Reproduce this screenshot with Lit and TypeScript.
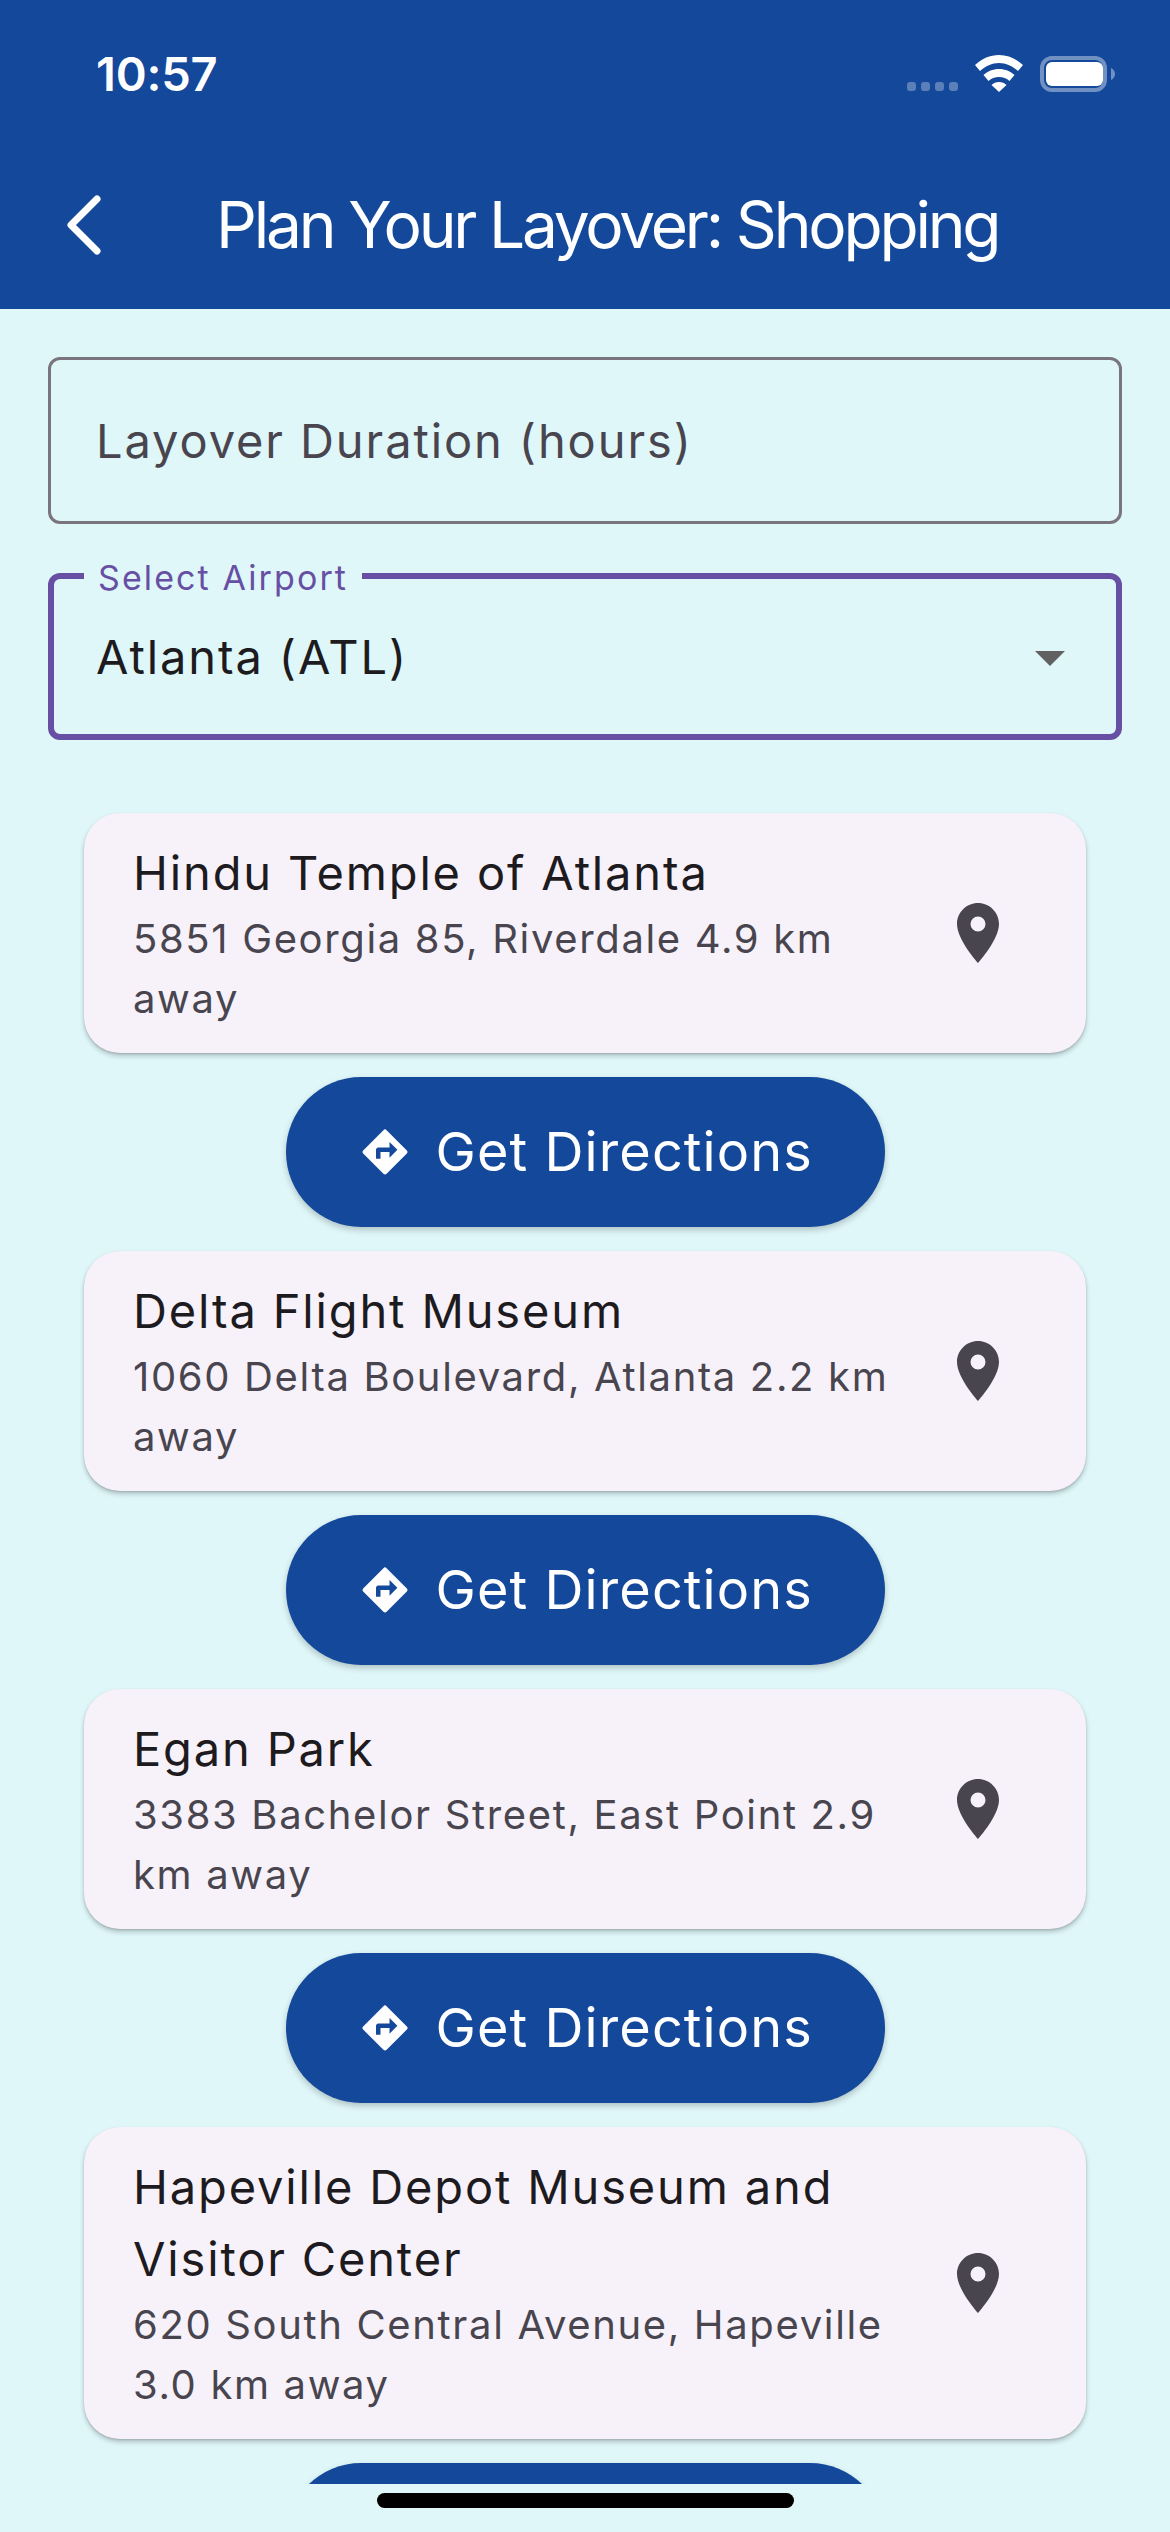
import { LitElement, html, css, nothing } from 'lit';
import { customElement } from 'lit/decorators.js';

const places = [
  { name: ['Hindu Temple of Atlanta'], address: ['5851 Georgia 85, Riverdale 4.9 km', 'away'] },
  { name: ['Delta Flight Museum'], address: ['1060 Delta Boulevard, Atlanta 2.2 km', 'away'] },
  { name: ['Egan Park'], address: ['3383 Bachelor Street, East Point 2.9', 'km away'] },
  { name: ['Hapeville Depot Museum and', 'Visitor Center'], address: ['620 South Central Avenue, Hapeville', '3.0 km away'] },
];

@customElement('app-root')
export class AppRoot extends LitElement {
  static styles = css`
    :host {
      display: flex;
      flex-direction: column;
      width: 1170px;
      height: 2532px;
      overflow: hidden;
      background: #dff7f9;
      font-family: Inter, 'Liberation Sans', sans-serif;
    }

    header {
      background: #14489b;
      color: #fff;
      height: 309px;
      flex: none;
    }

    .status {
      height: 141px;
      box-sizing: border-box;
      padding: 55px 55px 0 96px;
      display: flex;
      align-items: flex-start;
      justify-content: space-between;
    }

    .time {
      font-size: 47px;
      line-height: 38px;
      font-weight: 600;
      letter-spacing: -0.2px;
    }

    .status-icons {
      display: flex;
      align-items: flex-start;
    }

    .dots {
      display: flex;
      gap: 5px;
      margin-top: 27px;
      margin-right: 17px;
    }

    .dots span {
      width: 9px;
      height: 9px;
      border-radius: 3px;
      background: rgba(255, 255, 255, 0.3);
    }

    .wifi {
      display: block;
      margin-right: 17px;
    }

    .battery {
      display: block;
      margin-top: 1px;
    }

    .toolbar {
      height: 168px;
      display: flex;
      align-items: center;
      padding-left: 64px;
    }

    .toolbar svg {
      display: block;
      flex: none;
      margin-right: 112px;
    }

    .toolbar h1 {
      margin: 0;
      font-size: 64px;
      line-height: 88px;
      font-weight: 400;
      letter-spacing: -3.2px;
      white-space: nowrap;
    }

    .form {
      flex: none;
      padding: 48px 48px 0;
      display: flex;
      flex-direction: column;
      gap: 49px;
    }

    .field {
      position: relative;
      box-sizing: border-box;
      height: 167px;
      border-radius: 12px;
      border: 3px solid #79747e;
      padding: 0 45px;
      display: flex;
      align-items: center;
      justify-content: space-between;
      font-size: 47px;
      letter-spacing: 1.9px;
      color: #49454f;
    }

    .field.focused {
      border: 6px solid #6750a4;
      padding: 0 30px 0 42px;
      color: #1d1b20;
    }

    .field label {
      position: absolute;
      left: 30px;
      top: -21px;
      padding: 0 14px;
      background: #dff7f9;
      font-size: 34px;
      line-height: 40px;
      letter-spacing: 2.1px;
      color: #6750a4;
    }

    .field svg {
      display: block;
    }

    .list {
      flex: 1;
      min-height: 0;
      overflow: hidden;
      margin-top: 49px;
      padding: 24px 84px 0;
      display: flex;
      flex-direction: column;
      align-items: center;
      gap: 24px;
    }

    .card {
      flex: none;
      box-sizing: border-box;
      width: 1002px;
      padding: 24px 72px 24px 49px;
      border-radius: 36px;
      background: #f7f2fa;
      box-shadow: 0 3px 5px rgba(0, 0, 0, 0.22), 0 1px 2px rgba(0, 0, 0, 0.12);
      display: flex;
      align-items: center;
      justify-content: space-between;
    }

    .name {
      font-size: 47px;
      line-height: 72px;
      letter-spacing: 1.85px;
      color: #1d1b20;
      white-space: nowrap;
    }

    .address {
      font-size: 40px;
      line-height: 60px;
      letter-spacing: 1.65px;
      color: #49454f;
      white-space: nowrap;
    }

    .card svg {
      display: block;
      flex: none;
    }

    .directions {
      flex: none;
      box-sizing: border-box;
      height: 150px;
      width: 599px;
      padding: 0 72px;
      border: none;
      border-radius: 75px;
      background: #14489b;
      color: #fff;
      font-family: inherit;
      font-size: 54px;
      line-height: 64px;
      letter-spacing: 1.1px;
      display: flex;
      align-items: center;
      gap: 24px;
      box-shadow: 0 3px 6px rgba(0, 0, 0, 0.22);
      white-space: nowrap;
    }

    .directions svg {
      display: block;
      flex: none;
    }

    .home {
      flex: none;
      height: 48px;
      padding-top: 9px;
      box-sizing: border-box;
      display: flex;
      justify-content: center;
    }

    .home span {
      width: 417px;
      height: 15px;
      border-radius: 8px;
      background: #000;
    }
  `;

  // the last button only peeks in above the home bar, its label is scrolled out of view
  renderCard(place: { name: string[]; address: string[] }, peek: boolean) {
    return html`
      <div class="card">
        <div>
          ${place.name.map((line) => html`<div class="name">${line}</div>`)}
          ${place.address.map((line) => html`<div class="address">${line}</div>`)}
        </div>
        <svg width="72" height="72" viewBox="0 0 24 24" fill="#49454f">
          <path d="M12 2C8.13 2 5 5.13 5 9c0 5.25 7 13 7 13s7-7.75 7-13c0-3.87-3.13-7-7-7zm0 9.5a2.5 2.5 0 0 1 0-5 2.5 2.5 0 0 1 0 5z"></path>
        </svg>
      </div>
      <button class="directions">
        ${peek ? nothing : html`
          <svg width="54" height="54" viewBox="0 0 24 24" fill="#fff">
            <path d="M21.71 11.29l-9-9a.996.996 0 0 0-1.41 0l-9 9a.996.996 0 0 0 0 1.41l9 9c.39.39 1.02.39 1.41 0l9-9a.996.996 0 0 0 0-1.41zM14 14.5V12h-4v3H8v-4c0-.55.45-1 1-1h5V7.5l3.5 3.5-3.5 3.5z"></path>
          </svg>
          <span>Get Directions</span>
        `}
      </button>
    `;
  }

  render() {
    return html`
      <header>
        <div class="status">
          <span class="time">10:57</span>
          <div class="status-icons">
            <div class="dots"><span></span><span></span><span></span><span></span></div>
            <svg class="wifi" width="48" height="37" viewBox="0 0 48 37" fill="#fff">
              <path d="M24 0C15 0 7 3.600 0 10l5 6c5.500-5 12-8 19-8s13.500 3 19 8l5-6C41 3.600 33 0 24 0z"></path>
              <path d="M24 14c-6 0-11.500 2.300-15.500 6l5 6c2.700-2.500 6.500-4 10.500-4s7.800 1.500 10.500 4l5-6c-4-3.700-9.500-6-15.500-6z"></path>
              <path d="M24 27c-3 0-5.500 1-7.500 3L24 37l7.500-7c-2-2-4.500-3-7.500-3z"></path>
            </svg>
            <svg class="battery" width="75" height="36" viewBox="0 0 75 36">
              <rect x="2" y="2" width="63" height="32" rx="10" fill="none" stroke="#fff" stroke-opacity="0.4" stroke-width="4"></rect>
              <rect x="6" y="6" width="57" height="24" rx="6" fill="#fff"></rect>
              <path d="M71 12c2.500 1 4 3.500 4 6s-1.500 5-4 6z" fill="#fff" fill-opacity="0.4"></path>
            </svg>
          </div>
        </div>
        <div class="toolbar">
          <svg width="40" height="60" viewBox="0 0 40 60" fill="none" stroke="#fff" stroke-width="7" stroke-linecap="round" stroke-linejoin="round">
            <path d="M33 4 7 30l26 26"></path>
          </svg>
          <h1>Plan Your Layover: Shopping</h1>
        </div>
      </header>
      <div class="form">
        <div class="field">Layover Duration (hours)</div>
        <div class="field focused">
          <label>Select Airport</label>
          <span>Atlanta (ATL)</span>
          <svg width="72" height="72" viewBox="0 0 24 24" fill="#616161"><path d="M7 10l5 5 5-5z"></path></svg>
        </div>
      </div>
      <div class="list">
        ${places.map((place, i) => this.renderCard(place, i === places.length - 1))}
      </div>
      <div class="home"><span></span></div>
    `;
  }
}
